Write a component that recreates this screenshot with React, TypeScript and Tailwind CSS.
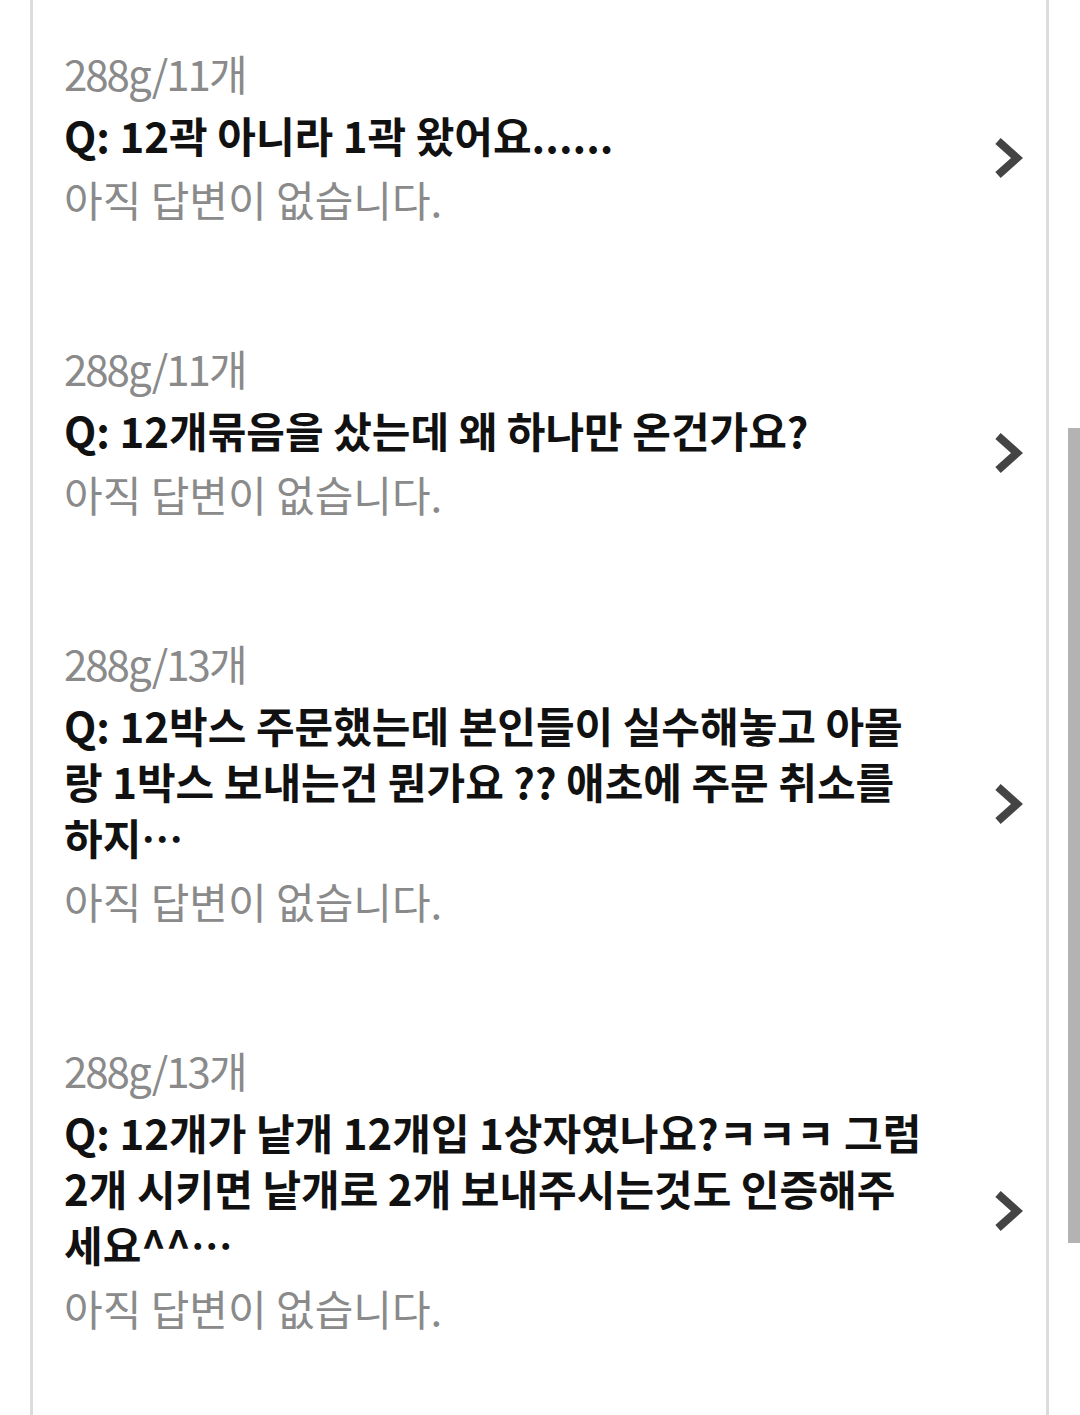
import React from 'react'

// Q&A list: option label, question (bold, up to 3 lines), answer status, chevron on the right.

interface QnaItem {
  option: string
  question: string
  answer: string
}

const items: QnaItem[] = [
  { option: '288g/11개', question: 'Q: 12곽 아니라 1곽 왔어요......', answer: '아직 답변이 없습니다.' },
  { option: '288g/11개', question: 'Q: 12개묶음을 샀는데 왜 하나만 온건가요?', answer: '아직 답변이 없습니다.' },
  {
    option: '288g/13개',
    question: 'Q: 12박스 주문했는데 본인들이 실수해놓고 아몰랑 1박스 보내는건 뭔가요 ?? 애초에 주문 취소를 하지…',
    answer: '아직 답변이 없습니다.',
  },
  {
    option: '288g/13개',
    question: 'Q: 12개가 낱개 12개입 1상자였나요?ㅋㅋㅋ 그럼 2개 시키면 낱개로 2개 보내주시는것도 인증해주세요^^…',
    answer: '아직 답변이 없습니다.',
  },
]

function Chevron() {
  return (
    <svg width="30" height="44" viewBox="0 0 30 44" fill="none">
      <polyline points="5,5 24,22 5,39" stroke="#444444" strokeWidth="8" strokeLinejoin="miter" />
    </svg>
  )
}

function QnaRow({ item }: { item: QnaItem }) {
  return (
    <div className="flex items-center pl-[31px] pr-[23px] pt-[35px] pb-[34px]">
      <div className="w-[870px] pb-[44px] text-[42px] leading-[56px]">
        <p className="mb-[6px] tracking-[-2px] text-[#8a8a8a]">{item.option}</p>
        <p className="font-bold text-[#111111]">{item.question}</p>
        <p className="mt-[8px] text-[#8a8a8a]">{item.answer}</p>
      </div>
      <div className="ml-auto">
        <Chevron />
      </div>
    </div>
  )
}

export default function App() {
  return (
    <div className="relative min-h-[1415px] w-full overflow-hidden bg-white font-['Noto_Sans_CJK_KR','Noto_Sans',sans-serif]">
      <div className="ml-[30px] min-h-[1415px] w-[1019px] border-x-[3px] border-[#dcdcdc] pt-[10px]">
        {items.map((item, i) => (
          <QnaRow key={i} item={item} />
        ))}
      </div>
      {/* overlay scrollbar */}
      <div className="absolute right-0 top-[428px] h-[815px] w-[12px] bg-[#b3b3b3]" />
    </div>
  )
}
